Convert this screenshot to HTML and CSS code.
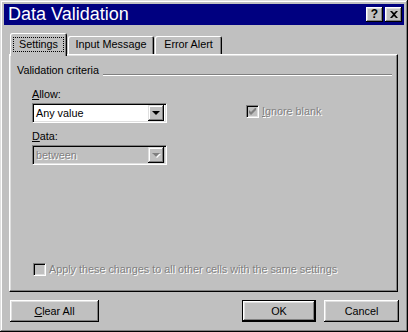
FILE: index.html
```html
<!DOCTYPE html>
<html lang="en">
<head>
  <meta charset="UTF-8" />
  <title>Data Validation</title>
  <link rel="stylesheet" href="styles.css">
</head>
<body>
  <div class="window">
    <div class="titlebar">
      <span class="title">Data Validation</span>
      <span class="cap-btn help">?</span>
      <span class="cap-btn close">
        <svg width="8" height="7" viewBox="0 0 8 7"><path d="M0 0h2l2 2 2-2h2L5 3.5 8 7H6L4 5 2 7H0l3-3.5z" fill="#000"/></svg>
      </span>
    </div>

    <div class="tabs">
      <div class="tab active"><span class="focus">Settings</span></div>
      <div class="tab input">Input Message</div>
      <div class="tab error">Error Alert</div>
    </div>

    <div class="panel">
      <div class="group-head">
        <span>Validation criteria</span>
        <span class="rule"></span>
      </div>

      <div class="criteria">
        <div class="field-label"><u>A</u>llow:</div>
        <div class="row">
          <div class="combo">
            <span class="value">Any value</span>
            <span class="drop"><span class="arrow"></span></span>
          </div>
          <div class="check ignore disabled">
            <span class="box">
              <svg width="7" height="7" viewBox="0 0 7 7"><path d="M0 2v3l2 2 5-5V-1L2 4z" fill="#808080"/></svg>
            </span>
            <span class="text"><u>I</u>gnore blank</span>
          </div>
        </div>
        <div class="field-label"><u>D</u>ata:</div>
        <div class="combo disabled">
          <span class="value">between</span>
          <span class="drop"><span class="arrow"></span></span>
        </div>
      </div>

      <div class="check apply disabled">
        <span class="box"></span>
        <span class="text">Apply these changes to all other cells with the same settings</span>
      </div>
    </div>

    <div class="buttons">
      <button class="btn clear"><u>C</u>lear All</button>
      <span class="spacer"></span>
      <button class="btn ok">OK</button>
      <button class="btn cancel">Cancel</button>
    </div>
  </div>
</body>
</html>
```

FILE: styles.css
```css
* { margin: 0; padding: 0; box-sizing: border-box; }
body {
  font-family: 'Liberation Sans', Arial, sans-serif;
  font-size: 10.8px;
  line-height: 13px;
  color: #000;
  background: #c0c0c0;
}
.window {
  width: 408px;
  height: 332px;
  padding: 4px;
  background: #c0c0c0;
  box-shadow: inset -1px -1px #000, inset 1px 1px #dfdfdf, inset -2px -2px #808080, inset 2px 2px #fff;
  display: flex;
  flex-direction: column;
}
.titlebar {
  height: 21px;
  background: #000080;
  color: #fff;
  display: flex;
  align-items: center;
  padding: 0 2px;
}
.title {
  flex: 1;
  font-size: 18px;
  line-height: 21px;
  padding-left: 2px;
}
.cap-btn {
  width: 17px;
  height: 15px;
  background: #c0c0c0;
  box-shadow: inset -1px -1px #000, inset 1px 1px #fff, inset -2px -2px #808080, inset 2px 2px #dfdfdf;
  display: flex;
  align-items: center;
  justify-content: center;
  color: #000;
}
.help {
  font-weight: bold;
  font-size: 12px;
  margin-right: 2px;
}
.tabs {
  display: flex;
  align-items: flex-end;
  height: 21px;
  margin-top: 8px;
  padding-left: 6px;
}
.tab {
  height: 18px;
  line-height: 17px;
  text-align: center;
  background: #c0c0c0;
  border-radius: 2px 2px 0 0;
  box-shadow: inset 1px 1px #fff, inset -1px 0 #000, inset -2px 0 #808080;
}
.tab.active {
  width: 57px;
  height: 23px;
  margin-bottom: -2px;
  position: relative;
  z-index: 1;
  padding-top: 3px;
}
.tab.input { width: 86px; margin-left: 1px; }
.tab.error { width: 67px; margin-left: 1px; }
.focus {
  display: inline-block;
  border: 1px dotted #000;
  padding: 0 5px;
  line-height: 13px;
}
.panel {
  height: 238px;
  margin: 0 6px 0 5px;
  border: 1px solid;
  border-color: #fff #000 #000 #fff;
  box-shadow: inset -1px -1px #808080, inset 1px 1px #dfdfdf;
  padding: 0 5px 15px 7px;
  display: flex;
  flex-direction: column;
}
.group-head {
  display: flex;
  margin-top: 9px;
  height: 13px;
}
.rule {
  flex: 1;
  height: 2px;
  margin: 10px 0 0 4px;
  border-top: 1px solid #808080;
  border-bottom: 1px solid #fff;
}
.criteria {
  margin-left: 15px;
}
.field-label {
  margin-top: 11px;
}
.field-label + .row,
.field-label + .combo {
  margin-top: 2px;
}
.row {
  display: flex;
  align-items: flex-start;
}
.combo {
  width: 135px;
  height: 20px;
  background: #fff;
  border: 1px solid;
  border-color: #808080 #fff #fff #808080;
  box-shadow: inset 1px 1px #000, inset -1px -1px #dfdfdf;
  display: flex;
  align-items: center;
  padding: 2px 2px 2px 3px;
}
.row + .field-label { margin-top: 7px; }
.value { flex: 1; }
.drop {
  width: 16px;
  height: 16px;
  background: #c0c0c0;
  box-shadow: inset -1px -1px #000, inset 1px 1px #dfdfdf, inset -2px -2px #808080, inset 2px 2px #fff;
  display: flex;
  align-items: center;
  justify-content: center;
}
.arrow {
  width: 0;
  height: 0;
  border-left: 4px solid transparent;
  border-right: 4px solid transparent;
  border-top: 4px solid #000;
}
.combo.disabled { background: #c0c0c0; }
.combo.disabled .value,
.disabled .text {
  color: #808080;
  text-shadow: 1px 1px 0 #fff;
}
.combo.disabled .arrow {
  border-top-color: #808080;
  filter: drop-shadow(1px 1px 0 #fff);
}
.check {
  display: flex;
  align-items: center;
}
.box {
  width: 13px;
  height: 13px;
  border: 1px solid;
  border-color: #808080 #fff #fff #808080;
  box-shadow: inset 1px 1px #000, inset -1px -1px #dfdfdf;
  background: #c0c0c0;
  display: flex;
  align-items: center;
  justify-content: center;
  margin-right: 3px;
}
.ignore {
  margin: 2px 0 0 79px;
}
.apply {
  margin: auto 0 0 16px;
}
.buttons {
  display: flex;
  margin-top: 8px;
  padding: 0 5px 0 6px;
}
.spacer { flex: 1; }
.btn {
  font: inherit;
  height: 22px;
  background: #c0c0c0;
  border: none;
  box-shadow: inset -1px -1px #000, inset 1px 1px #fff, inset -2px -2px #808080, inset 2px 2px #dfdfdf;
}
.clear { width: 89px; }
.ok {
  width: 74px;
  margin-right: 8px;
  box-shadow: inset 0 0 0 1px #000, inset -2px -2px #000, inset 2px 2px #fff, inset -3px -3px #808080, inset 3px 3px #dfdfdf;
}
.cancel { width: 75px; }
```
